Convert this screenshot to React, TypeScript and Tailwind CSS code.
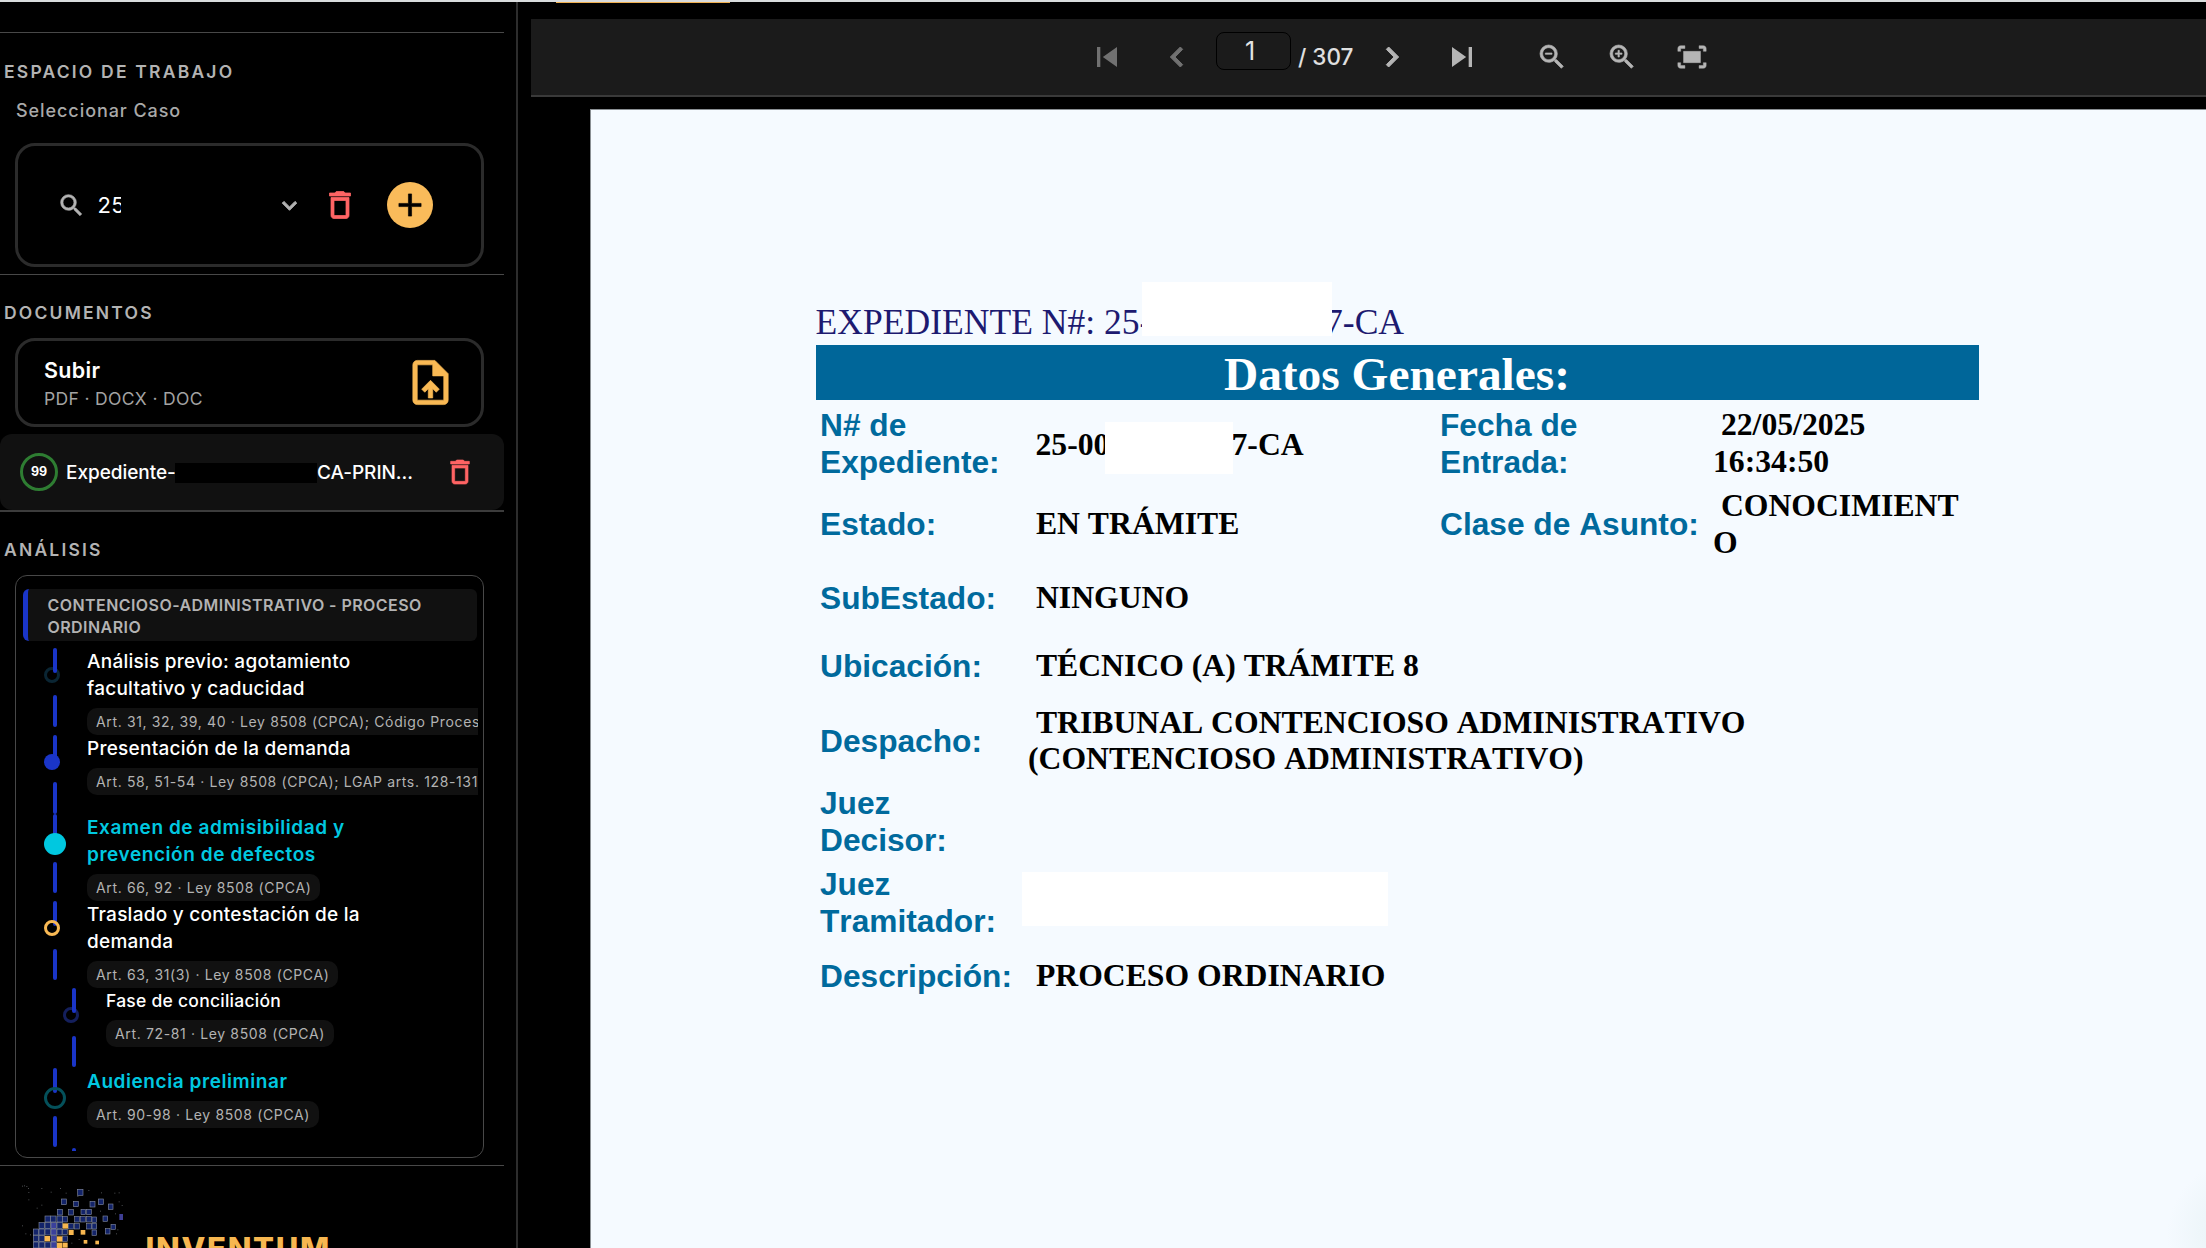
import type { ReactNode } from "react";
import clsx from "clsx";
import {
	MdAdd,
	MdChevronLeft,
	MdChevronRight,
	MdDeleteOutline,
	MdFitScreen,
	MdKeyboardArrowDown,
	MdOutlineUploadFile,
	MdSearch,
	MdSkipNext,
	MdSkipPrevious,
	MdZoomIn,
	MdZoomOut,
} from "react-icons/md";

type Marker = "faded" | "done" | "current" | "pending" | "fadedBlue" | "milestone";

interface Step {
	title: string;
	articles: string;
	marker: Marker;
	nested?: boolean;
}

const steps: Step[] = [
	{
		title: "Análisis previo: agotamiento facultativo y caducidad",
		articles: "Art. 31, 32, 39, 40 · Ley 8508 (CPCA); Código Procesal",
		marker: "faded",
	},
	{
		title: "Presentación de la demanda",
		articles: "Art. 58, 51-54 · Ley 8508 (CPCA); LGAP arts. 128-131",
		marker: "done",
	},
	{
		title: "Examen de admisibilidad y prevención de defectos",
		articles: "Art. 66, 92 · Ley 8508 (CPCA)",
		marker: "current",
	},
	{
		title: "Traslado y contestación de la demanda",
		articles: "Art. 63, 31(3) · Ley 8508 (CPCA)",
		marker: "pending",
	},
	{
		title: "Fase de conciliación",
		articles: "Art. 72-81 · Ley 8508 (CPCA)",
		marker: "fadedBlue",
		nested: true,
	},
	{
		title: "Audiencia preliminar",
		articles: "Art. 90-98 · Ley 8508 (CPCA)",
		marker: "milestone",
	},
];

const markerStyles: Record<Marker, string> = {
	faded: "size-4 border-[3px] border-[#0a2533]",
	done: "size-4 bg-[#1a35c8]",
	current: "size-[22px] bg-[#00c8e0]",
	pending: "size-4 border-[3px] border-[#f9b954]",
	fadedBlue: "size-4 border-[3px] border-[#141f5c]",
	milestone: "size-[22px] border-[3px] border-[#04505a]",
};

const SectionTitle = ({ children }: { children: ReactNode }) => (
	<h2 className="pl-1 text-[17.5px] leading-6 font-semibold tracking-[2.2px] text-[#b3b3b3]">{children}</h2>
);

const TimelineStep = ({ title, articles, marker, nested }: Step) => {
	const isKey = marker === "current" || marker === "milestone";
	// 淡色圆环位于连线下方
	const isFaded = marker === "faded" || marker === "fadedBlue";

	return (
		<li className={clsx("flex min-h-[79.8px] shrink-0", nested ? "pl-[46px]" : "pl-[27px]")}>
			<div className="relative w-[43px] shrink-0">
				<span className={clsx("absolute left-0 top-[19px] rounded-full", markerStyles[marker], !isFaded && "z-10")} />
				<div className="relative ml-[9px] h-[25px] w-1 rounded-xs bg-[#1a35c8]" />
				<div className="mt-[22.5px] ml-[9px] h-[31.5px] w-1 rounded-xs bg-[#1a35c8]" />
			</div>
			<div className="min-w-0 flex-1">
				<p
					className={clsx(
						"max-w-[290px]",
						nested ? "text-[17.5px] leading-[25.5px]" : "text-[19px] leading-[27px]",
						isKey ? "font-semibold tracking-[0.57px] text-[#00c8e0]" : "font-medium tracking-[0.25px] text-white",
					)}
				>
					{title}
				</p>
				<span className="mt-[6px] block h-[27px] w-fit rounded-[10px] bg-[#111] px-[9px] text-[14px] leading-[27px] tracking-[0.64px] whitespace-nowrap text-[#b3b3b3]">
					{articles}
				</span>
			</div>
		</li>
	);
};

const blueCells = [
	[233, 88, 16], [184, 117, 15], [221, 124, 14], [270, 124, 15], [295, 117, 15], [325, 132, 14],
	[172, 148, 15], [206, 149, 14], [243, 148, 14], [260, 148, 14], [309, 168, 14], [333, 193, 13], [316, 206, 14],
	[135, 168, 16], [152, 168, 16], [171, 168, 16], [188, 170, 14], [224, 170, 14], [242, 170, 14], [260, 170, 14], [276, 171, 14],
	[117, 188, 16], [135, 188, 16], [153, 188, 16], [171, 188, 16], [206, 191, 14], [224, 191, 14], [260, 191, 14], [276, 191, 14],
	[100, 207, 16], [117, 207, 16], [135, 207, 16], [153, 207, 16], [171, 208, 15], [188, 208, 14], [276, 210, 14],
	[100, 227, 16], [117, 227, 16], [153, 227, 16], [188, 228, 14],
	[100, 246, 16], [117, 246, 16], [135, 246, 16], [153, 246, 16],
];

const amberCells = [
	[188, 190, 16], [206, 210, 15], [242, 210, 14], [134, 228, 16], [171, 229, 16], [171, 248, 16], [188, 248, 15], [251, 240, 11], [286, 242, 11],
];

const specks = [
	[66, 77], [72, 76], [79, 78], [84, 84], [85, 96], [85, 118], [124, 84], [152, 95], [180, 84], [197, 98], [265, 90],
	[303, 97], [343, 98], [356, 97], [356, 124], [365, 135], [124, 134], [110, 143], [66, 196], [76, 220], [348, 220],
	[352, 208], [214, 248], [236, 237], [232, 108], [300, 152], [345, 160], [90, 223],
];

const BrandMark = () => (
	<svg viewBox="60 72 330 192" className="h-16 w-[110px] shrink-0">
		{specks.map(([x, y]) => (
			<rect key={`${x}-${y}`} x={x} y={y} width="3" height="3" fill="#4a4d50" />
		))}
		{blueCells.map(([x, y, s]) => (
			<rect
				key={`${x}-${y}`}
				x={x}
				y={y}
				width={s}
				height={s + 2}
				fill={x === 153 ? "#3a409c" : "#13246a"}
				stroke="#868ea2"
				strokeWidth="1.8"
			/>
		))}
		<rect x="358" y="162" width="11" height="18" fill="#3f3f94" />
		{amberCells.map(([x, y, s]) => (
			<rect key={`${x}-${y}`} x={x} y={y} width={s} height={s} fill="#f7b750" />
		))}
	</svg>
);

const Sidebar = () => (
	<aside className="flex w-[518px] shrink-0 flex-col border-r-2 border-[#2d2d2d]">
		<div className="mr-3 h-[31px] shrink-0 border-b border-[#484848]" />

		<section className="mr-3 h-[242px] shrink-0 border-b-[1.5px] border-[#484848] pt-[27px]">
			<SectionTitle>ESPACIO DE TRABAJO</SectionTitle>
			<p className="mt-[15px] pl-4 text-[18px] leading-6 font-medium tracking-[0.93px] text-[#a9a9a9]">Seleccionar Caso</p>
			<div className="mt-5 mr-5 ml-[15px] flex h-[124px] items-center rounded-[20px] border-[3px] border-[#2b2b2b] pl-[38.5px]">
				<MdSearch strokeWidth={0.5} className="size-[29px] text-[#b3b3b3]" />
				<div className="ml-3 w-[23px] overflow-hidden text-[22px] tracking-[0.3px] whitespace-nowrap text-white">25</div>
				<MdKeyboardArrowDown strokeWidth={0.8} className="ml-[154px] size-[29px] text-[#b3b3b3]" />
				<MdDeleteOutline strokeWidth={0.5} className="ml-[18.5px] size-9 text-[#ff6464]" />
				<button className="ml-[29px] flex size-[46px] items-center justify-center rounded-full bg-[#f9bb5a]">
					<MdAdd strokeWidth={0.4} className="size-[38px] text-black" />
				</button>
			</div>
		</section>

		<section className="mr-3 flex h-[237px] shrink-0 flex-col border-b-2 border-[#3c3c3c] pt-[26px]">
			<SectionTitle>DOCUMENTOS</SectionTitle>
			<div className="mt-[13px] mr-5 ml-[15px] flex h-[89px] shrink-0 items-center justify-between rounded-[20px] border-[3px] border-[#2b2b2b] pr-6 pl-[26px]">
				<div className="pt-[3px]">
					<p className="text-[21.5px] leading-7 font-semibold tracking-[0.3px] text-white">Subir</p>
					<p className="text-[17.5px] leading-[29px] tracking-[0.35px] text-[#a3a3a3]">PDF · DOCX · DOC</p>
				</div>
				<MdOutlineUploadFile strokeWidth={0.3} className="size-[53px] text-[#f9b954]" />
			</div>
			<div className="mt-[7px] flex h-[76px] items-center rounded-xl bg-[#111] pl-5">
				<div className="flex size-[38px] shrink-0 items-center justify-center rounded-full border-[3.5px] border-[#2e7d32] text-[12.5px] font-bold text-white">
					99
				</div>
				<div className="ml-2 flex items-center pt-0.5 text-[19px] font-medium tracking-[-0.05px] whitespace-nowrap text-white">
					<span className="w-[109px]">Expediente-</span>
					<span className="h-5 w-[142px] bg-black" />
					<span>CA-PRIN...</span>
				</div>
				<MdDeleteOutline strokeWidth={0.5} className="mr-[28.5px] ml-auto size-8 text-[#ff6464]" />
			</div>
		</section>

		<section className="mr-3 h-[654px] shrink-0 border-b-[1.5px] border-[#484848] pt-[26px]">
			<SectionTitle>ANÁLISIS</SectionTitle>
			<div className="mt-[13px] mr-5 ml-[15px] flex h-[583px] flex-col overflow-hidden rounded-xl border-[1.5px] border-[#484848] px-[6.5px] pt-[13px] pb-[6px]">
				<h3 className="mb-[7px] h-[51.5px] shrink-0 rounded-md border-l-[5px] border-[#1a35c8] bg-[#111] pt-[4.5px] pl-5 text-[16px] leading-[22.3px] font-semibold tracking-[0.44px] text-[#b3b3b3]">
					CONTENCIOSO-ADMINISTRATIVO - PROCESO ORDINARIO
				</h3>
				<ol className="-mr-px -ml-[5.5px] flex min-h-0 flex-1 flex-col overflow-hidden">
					{steps.map(step => (
						<TimelineStep key={step.title} {...step} />
					))}
					<li className="shrink-0 pl-[55px]">
						<div className="h-6 w-1 rounded-xs bg-[#1a35c8]" />
					</li>
				</ol>
			</div>
		</section>

		<footer className="flex shrink-0 items-start pt-[18px] pl-5">
			<BrandMark />
			<span className="mt-[44.5px] ml-[15.5px] text-[31px] leading-10 font-extrabold tracking-[1.7px] text-[#f7b750]">INVENTUM</span>
		</footer>
	</aside>
);

const Toolbar = () => (
	<div className="flex h-[78px] shrink-0 items-center border-b-2 border-[#3a3a3a] bg-[#1b1b1b] pl-[556px] text-[#b5b5b5]">
		<MdSkipPrevious className="size-10 text-[#717171]" />
		<MdChevronLeft strokeWidth={0.6} className="ml-[30px] size-10 text-[#717171]" />
		<div className="mb-3 ml-[19px] flex h-[38px] w-[75px] items-center justify-center rounded-lg border-[1.5px] border-black pt-0.5 pr-[7px] text-[25px] text-[#e4e4e4]">
			1
		</div>
		<span className="ml-[7px] w-[57px] text-[22.5px] font-medium whitespace-nowrap text-[#e0e0e0]">/ 307</span>
		<MdChevronRight strokeWidth={0.6} className="ml-[17px] size-10" />
		<MdSkipNext className="ml-[30px] size-10" />
		<MdZoomOut strokeWidth={0.5} className="ml-[54px] size-8" />
		<MdZoomIn strokeWidth={0.5} className="ml-[38px] size-8" />
		<MdFitScreen strokeWidth={0.3} className="ml-[37px] size-[34px]" />
	</div>
);

const Label = ({ children }: { children: ReactNode }) => (
	<div className="flex items-center font-['Liberation_Sans',Arial,sans-serif] text-[#006a9d]">
		<span className="whitespace-pre">{children}</span>
	</div>
);

// 首行有一个前导空格，与后续行错开
const Value = ({ children, wide }: { children?: ReactNode; wide?: boolean }) => (
	<div className={clsx("flex items-center font-['Liberation_Serif','Times_New_Roman',serif] text-black", wide && "col-span-3")}>
		<span className="whitespace-pre">{children}</span>
	</div>
);

const CaseTable = () => (
	<div className="grid grid-cols-[208px_412px_273px_1fr] grid-rows-[81px_81px_67px_69px_80.5px_80.5px_81px_67px] pt-[3px] pl-[4.5px] text-[31.7px] leading-[36.4px] font-bold [font-kerning:none]">
		<Label>{"N# de\nExpediente:"}</Label>
		<div className="flex items-center pt-[3px] pl-[7.5px] font-['Liberation_Serif','Times_New_Roman',serif] whitespace-nowrap text-black">
			<span className="w-[69px]">25-00</span>
			<span className="z-10 mt-[5px] h-[52px] w-[128px] bg-white" />
			<span className="-ml-px">7-CA</span>
		</div>
		<Label>{"Fecha de\nEntrada:"}</Label>
		<Value>{" 22/05/2025\n16:34:50"}</Value>

		<Label>Estado:</Label>
		<Value> EN TRÁMITE</Value>
		<Label>Clase de Asunto:</Label>
		<Value>{" CONOCIMIENT\nO"}</Value>

		<Label>SubEstado:</Label>
		<Value wide> NINGUNO</Value>

		<Label>Ubicación:</Label>
		<Value wide> TÉCNICO (A) TRÁMITE 8</Value>

		<Label>Despacho:</Label>
		<Value wide>{" TRIBUNAL CONTENCIOSO ADMINISTRATIVO\n(CONTENCIOSO ADMINISTRATIVO)"}</Value>

		<Label>{"Juez\nDecisor:"}</Label>
		<Value wide />

		<Label>{"Juez\nTramitador:"}</Label>
		<div className="col-span-3 flex items-center">
			<div className="-mt-2 -ml-[6px] h-[54px] w-[366px] bg-white" />
		</div>

		<Label>Descripción:</Label>
		<Value wide> PROCESO ORDINARIO</Value>
	</div>
);

const DocumentPage = () => (
	<div className="relative mt-3 ml-[59px] flex-1 border-t border-l border-[#8a8f93] bg-[#f5faff] pt-[172px] pl-[224.5px]">
		<div className="flex h-[54px] font-['Liberation_Serif','Times_New_Roman',serif] text-[35.6px] leading-[40px] whitespace-nowrap text-[#1d1a70] [font-kerning:none]">
			<span className="w-[326.5px] overflow-hidden pt-[20px]">EXPEDIENTE N#: 25-</span>
			<span className="z-10 w-[190px] bg-white" />
			<span className="-ml-[7px] pt-[20px]">7-CA</span>
		</div>
		<div className="mt-[9px] w-[1163px]">
			<h1 className="h-[55px] bg-[#006699] text-center font-['Liberation_Serif','Times_New_Roman',serif] text-[47.4px] leading-[58px] font-bold text-white">
				Datos Generales:
			</h1>
			<CaseTable />
		</div>
		{/* 视口外悬浮按钮的光晕 */}
		<div className="absolute -right-[116px] -bottom-[66px] size-[156px] rounded-full bg-radial from-[#e6f2f6] via-[#eef6fa] via-40% to-[#f5faff] to-70%" />
	</div>
);

export default function App() {
	return (
		<div className="flex h-[1248px] w-[2206px] flex-col overflow-hidden bg-black font-['Inter','Liberation_Sans',sans-serif] [&_path[fill=none]]:stroke-none">
			<div className="h-0.5 shrink-0 bg-[#d9dcdd]" />
			<div className="flex min-h-0 flex-1">
				<Sidebar />
				<main className="flex min-w-0 flex-1 flex-col pl-[13px]">
					<div className="mb-4 ml-[25px] h-px w-[174px] shrink-0 bg-[#f0b050]" />
					<Toolbar />
					<DocumentPage />
				</main>
			</div>
		</div>
	);
}
